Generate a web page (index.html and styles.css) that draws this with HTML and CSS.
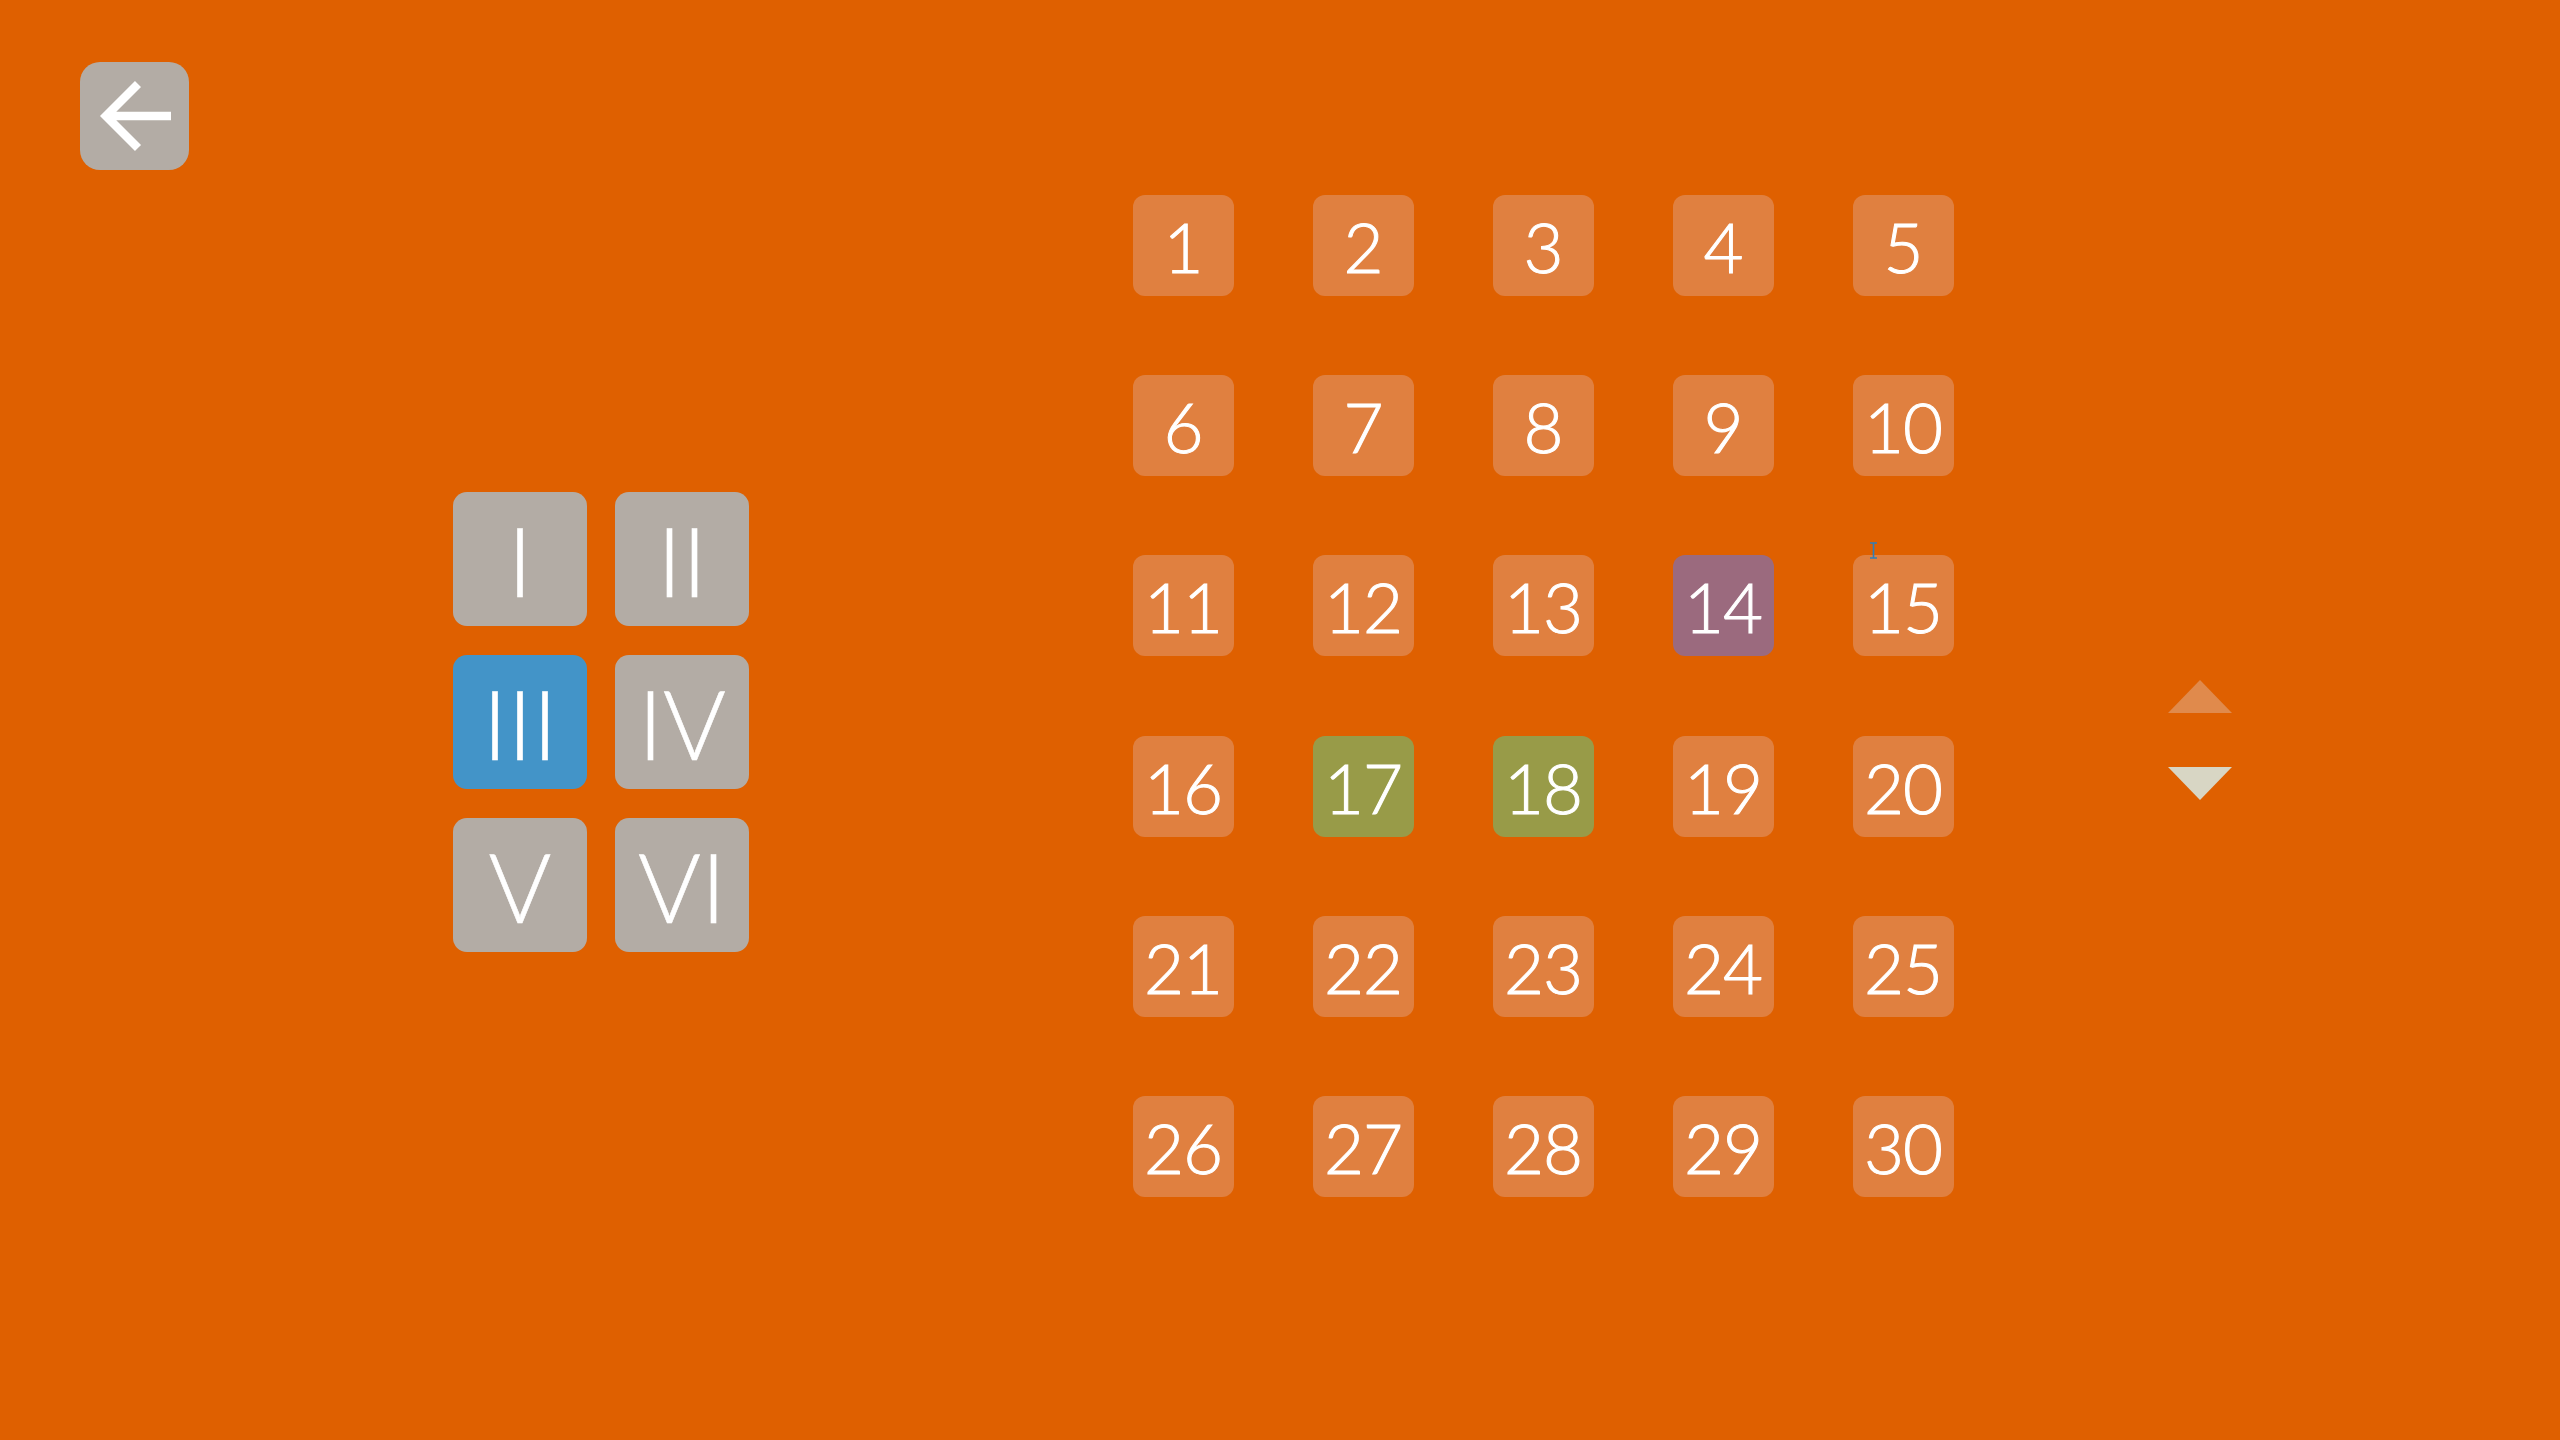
FILE: index.html
```html
<!DOCTYPE html>
<html lang="en">
<head>
<meta charset="utf-8">
<title>Levels</title>
<link rel="stylesheet" href="styles.css">
</head>
<body>
<div class="app">
  <div class="col-back">
    <button class="back" aria-label="Back">
      <svg width="109" height="108" viewBox="0 0 109 108"><path d="M58 22 L26 54 L58 86 M26 54 H91" fill="none" stroke="#fff" stroke-width="8.5" stroke-linejoin="miter" stroke-linecap="butt"/></svg>
    </button>
  </div>
  <div class="roman">
    <div class="rtile">I</div>
    <div class="rtile">II</div>
    <div class="rtile active">III</div>
    <div class="rtile">IV</div>
    <div class="rtile">V</div>
    <div class="rtile">VI</div>
  </div>
  <div class="levels">
    <div class="tile">1</div><div class="tile">2</div><div class="tile">3</div><div class="tile">4</div><div class="tile">5</div>
    <div class="tile">6</div><div class="tile">7</div><div class="tile">8</div><div class="tile">9</div><div class="tile">10</div>
    <div class="tile">11</div><div class="tile">12</div><div class="tile">13</div><div class="tile purple">14</div><div class="tile">15</div>
    <div class="tile">16</div><div class="tile olive">17</div><div class="tile olive">18</div><div class="tile">19</div><div class="tile">20</div>
    <div class="tile">21</div><div class="tile">22</div><div class="tile">23</div><div class="tile">24</div><div class="tile">25</div>
    <div class="tile">26</div><div class="tile">27</div><div class="tile">28</div><div class="tile">29</div><div class="tile">30</div>
  </div>
  <div class="pager">
    <div class="tri up"></div>
    <div class="tri down"></div>
  </div>
  <svg class="cursor" width="9" height="17" viewBox="0 0 9 17"><path d="M1 1 H8 M4.5 1 V16 M1 16 H8" fill="none" stroke="#2f7fb8" stroke-width="1.6"/></svg>
</div>
</body>
</html>
```
FILE: styles.css
```css
html, body {
  margin: 0;
  padding: 0;
  background: #df6000;
}
.app {
  position: relative;
  width: 2560px;
  height: 1440px;
  display: flex;
  align-items: flex-start;
  background: #df6000;
  font-family: Lato, "DejaVu Sans", sans-serif;
  color: #fff;
}
.col-back {
  margin-left: 80px;
  margin-top: 62px;
}
.back {
  width: 109px;
  height: 108px;
  border: 0;
  padding: 0;
  border-radius: 20px;
  background: #b3aca5;
  display: block;
}
.back svg {
  display: block;
}
.roman {
  margin-left: 264px;
  margin-top: 492px;
  display: grid;
  grid-template-columns: 134px 134px;
  grid-auto-rows: 134px;
  gap: 29px 28px;
}
.rtile {
  background: #b3aca5;
  border-radius: 14px;
  display: flex;
  align-items: center;
  justify-content: center;
  font-size: 96px;
  font-weight: 300;
  line-height: 1;
  padding-top: 1px;
  box-sizing: border-box;
  -webkit-text-stroke: 0.6px #fff;
}
.rtile.active {
  background: #4394c8;
}
.levels {
  margin-left: 384px;
  margin-top: 195px;
  display: grid;
  grid-template-columns: repeat(5, 101px);
  grid-auto-rows: 101px;
  column-gap: 79px;
  row-gap: 79.2px;
}
.tile {
  background: #e08040;
  border-radius: 12px;
  display: flex;
  align-items: center;
  justify-content: center;
  font-size: 69px;
  font-weight: 300;
  line-height: 1;
  padding-top: 2px;
  box-sizing: border-box;
  letter-spacing: -1px;
  text-indent: -1px;
  -webkit-text-stroke: 1px #fff;
}
.tile.purple {
  background: #9b6a7e;
}
.tile.olive {
  background: #989b48;
}
.pager {
  margin-left: 214px;
  margin-top: 680px;
  display: flex;
  flex-direction: column;
  gap: 54px;
}
.tri {
  width: 0;
  height: 0;
  border-left: 32px solid transparent;
  border-right: 32px solid transparent;
}
.tri.up {
  border-bottom: 33px solid #e08a4c;
}
.tri.down {
  border-top: 33px solid #d8d6c4;
}
.cursor {
  position: absolute;
  left: 1869px;
  top: 542px;
}
```
